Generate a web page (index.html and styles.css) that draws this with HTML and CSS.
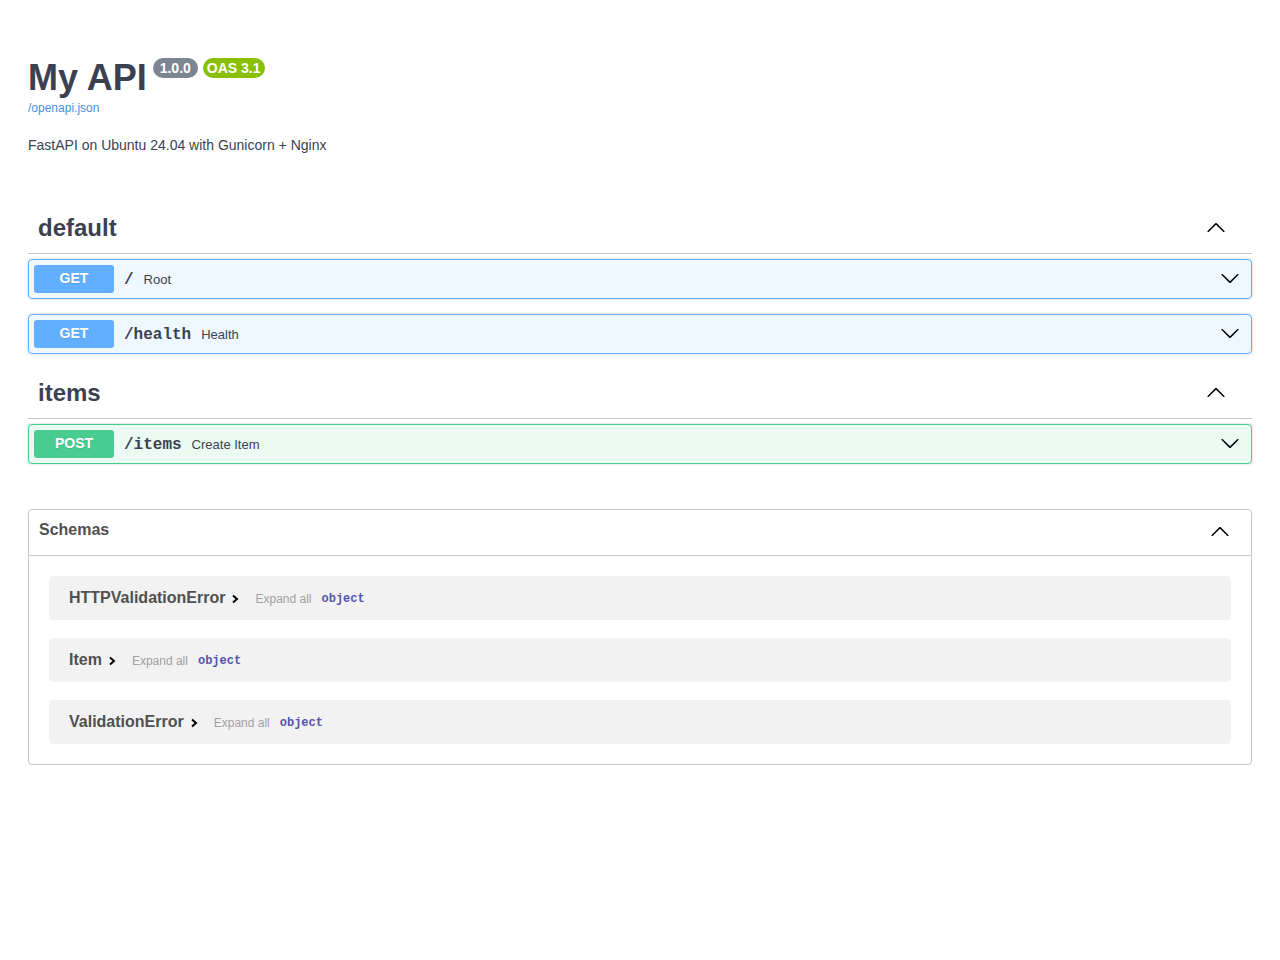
FILE: index.html
```html
<!DOCTYPE html>
<html lang="en">
<head>
    <meta charset="UTF-8">
    <meta name="viewport" content="width=device-width, initial-scale=1.0">
    <title>My API - Swagger UI</title>
    <link rel="stylesheet" href="styles.css">
</head>
<body>
    <div class="wrapper">
        <div class="info">
            <h1 class="title">
                <span>My API</span>
                <span class="badge badge-version">1.0.0</span>
                <span class="badge badge-oas">OAS 3.1</span>
            </h1>
            <a class="spec-link" href="#">/openapi.json</a>
            <p class="description">FastAPI on Ubuntu 24.04 with Gunicorn + Nginx</p>
        </div>

        <!-- tag: default -->
        <div class="tag-section">
            <div class="tag-header">
                <h3>default</h3>
                <svg class="arrow" width="20" height="20" viewBox="0 0 20 20"><path d="M17.418 14.908c.272.268.709.268.979 0s.271-.701 0-.969l-7.908-7.83c-.27-.268-.707-.268-.979 0l-7.908 7.83c-.27.268-.27.701 0 .969.271.268.709.268.979 0L10 7.767l7.418 7.141z"/></svg>
            </div>
            <div class="tag-body">
                <div class="opblock opblock-get">
                    <span class="method">GET</span>
                    <span class="route">
                        <span class="path">/</span>
                        <span class="summary">Root</span>
                    </span>
                    <svg class="arrow" width="20" height="20" viewBox="0 0 20 20"><path d="M17.418 6.109c.272-.268.709-.268.979 0s.271.701 0 .969l-7.908 7.83c-.27.268-.707.268-.979 0l-7.908-7.83c-.27-.268-.27-.701 0-.969.271-.268.709-.268.979 0L10 13.25l7.418-7.141z"/></svg>
                </div>
                <div class="opblock opblock-get">
                    <span class="method">GET</span>
                    <span class="route">
                        <span class="path">/health</span>
                        <span class="summary">Health</span>
                    </span>
                    <svg class="arrow" width="20" height="20" viewBox="0 0 20 20"><path d="M17.418 6.109c.272-.268.709-.268.979 0s.271.701 0 .969l-7.908 7.83c-.27.268-.707.268-.979 0l-7.908-7.83c-.27-.268-.27-.701 0-.969.271-.268.709-.268.979 0L10 13.25l7.418-7.141z"/></svg>
                </div>
            </div>
        </div>

        <!-- tag: items -->
        <div class="tag-section">
            <div class="tag-header">
                <h3>items</h3>
                <svg class="arrow" width="20" height="20" viewBox="0 0 20 20"><path d="M17.418 14.908c.272.268.709.268.979 0s.271-.701 0-.969l-7.908-7.83c-.27-.268-.707-.268-.979 0l-7.908 7.83c-.27.268-.27.701 0 .969.271.268.709.268.979 0L10 7.767l7.418 7.141z"/></svg>
            </div>
            <div class="tag-body">
                <div class="opblock opblock-post">
                    <span class="method">POST</span>
                    <span class="route">
                        <span class="path">/items</span>
                        <span class="summary">Create Item</span>
                    </span>
                    <svg class="arrow" width="20" height="20" viewBox="0 0 20 20"><path d="M17.418 6.109c.272-.268.709-.268.979 0s.271.701 0 .969l-7.908 7.83c-.27.268-.707.268-.979 0l-7.908-7.83c-.27-.268-.27-.701 0-.969.271-.268.709-.268.979 0L10 13.25l7.418-7.141z"/></svg>
                </div>
            </div>
        </div>

        <!-- schemas -->
        <section class="models">
            <div class="models-header">
                <h4>Schemas</h4>
                <svg class="arrow" width="20" height="20" viewBox="0 0 20 20"><path d="M17.418 14.908c.272.268.709.268.979 0s.271-.701 0-.969l-7.908-7.83c-.27-.268-.707-.268-.979 0l-7.908 7.83c-.27.268-.27.701 0 .969.271.268.709.268.979 0L10 7.767l7.418 7.141z"/></svg>
            </div>
            <div class="models-body">
                <div class="model-row">
                    <span class="model-title">HTTPValidationError</span>
                    <svg class="toggle" width="8" height="10" viewBox="0 0 8 10"><polyline points="2,1.5 6,5 2,8.5"/></svg>
                    <span class="expand">Expand all</span>
                    <span class="type">object</span>
                </div>
                <div class="model-row">
                    <span class="model-title">Item</span>
                    <svg class="toggle" width="8" height="10" viewBox="0 0 8 10"><polyline points="2,1.5 6,5 2,8.5"/></svg>
                    <span class="expand">Expand all</span>
                    <span class="type">object</span>
                </div>
                <div class="model-row">
                    <span class="model-title">ValidationError</span>
                    <svg class="toggle" width="8" height="10" viewBox="0 0 8 10"><polyline points="2,1.5 6,5 2,8.5"/></svg>
                    <span class="expand">Expand all</span>
                    <span class="type">object</span>
                </div>
            </div>
        </section>
    </div>
</body>
</html>
```

FILE: styles.css
```css
body {
    margin: 0;
    background: #fff;
    font-family: "Liberation Sans", Arial, sans-serif;
    color: #3b4151;
}
.wrapper {
    padding: 0 28px;
}

/* header */
.info {
    padding-top: 56px;
    margin-bottom: 49px;
}
.title {
    display: flex;
    align-items: flex-start;
    margin: 0;
    font-size: 36px;
    line-height: 43px;
    font-weight: bold;
    color: #3b4151;
}
.badge {
    margin-top: 2px;
    margin-left: 5px;
    height: 20px;
    line-height: 20px;
    padding: 0 6px;
    border-radius: 57px;
    font-size: 14px;
    color: #fff;
}
.badge-version {
    margin-left: 6px;
    padding: 0 7px;
    background: #7d8492;
}
.badge-oas {
    padding: 0 4px;
    background: #89bf04;
}
.spec-link {
    display: block;
    margin-top: 2px;
    font-size: 12px;
    line-height: 15px;
    color: #4990e2;
    text-decoration: none;
}
.description {
    margin: 19px 0 0;
    font-size: 14px;
    line-height: 20px;
}

/* tag groups */
.tag-section {
    margin-bottom: 15px;
}
.tag-header {
    display: flex;
    align-items: center;
    justify-content: space-between;
    padding: 9px 26px 11px 10px;
    border-bottom: 1px solid rgba(59, 65, 81, .3);
}
.tag-header h3 {
    margin: 0;
    font-size: 24px;
    line-height: 29px;
}
.tag-header .arrow {
    margin-bottom: 2px;
}
.tag-body {
    padding-top: 5px;
}
.arrow {
    flex: none;
    fill: #000;
}

/* operations */
.opblock {
    display: flex;
    align-items: center;
    padding: 5px 11px 5px 5px;
    margin-bottom: 15px;
    border: 1px solid;
    border-radius: 4px;
    box-shadow: 0 0 3px rgba(0, 0, 0, .19);
}
.opblock:last-child {
    margin-bottom: 0;
}
.opblock .arrow {
    margin-bottom: 3px;
}
.opblock-get {
    background: rgba(97, 175, 254, .1);
    border-color: #61affe;
}
.opblock-get .method {
    background: #61affe;
}
.opblock-post {
    background: rgba(73, 204, 144, .1);
    border-color: #49cc90;
}
.opblock-post .method {
    background: #49cc90;
}
.method {
    width: 80px;
    height: 28px;
    line-height: 27px;
    border-radius: 3px;
    text-align: center;
    font-size: 14px;
    font-weight: bold;
    color: #fff;
    text-shadow: 0 1px 0 rgba(0, 0, 0, .1);
}
.route {
    flex: 1;
    display: flex;
    align-items: baseline;
    padding-top: 2px;
}
.path {
    padding: 0 10px;
    font-family: "Liberation Mono", "Courier New", monospace;
    font-size: 16px;
    font-weight: bold;
}
.summary {
    font-size: 13px;
}

/* schemas */
.models {
    margin-top: 45px;
    border: 1px solid rgba(59, 65, 81, .3);
    border-radius: 4px;
}
.models-header {
    display: flex;
    align-items: center;
    justify-content: space-between;
    height: 45px;
    padding: 0 21px 0 10px;
    border-bottom: 1px solid rgba(59, 65, 81, .3);
}
.models-header h4 {
    margin: 0 0 5px;
    font-size: 16px;
    color: #505050;
}
.models-header .arrow {
    margin-bottom: 3px;
}
.models-body {
    display: flex;
    flex-direction: column;
    gap: 18px;
    padding: 20px;
}
.model-row {
    display: flex;
    align-items: center;
    height: 44px;
    padding: 0 20px;
    border-radius: 4px;
    background: rgba(0, 0, 0, .05);
}
.model-title {
    font-size: 16px;
    font-weight: bold;
    color: #505050;
}
.toggle {
    margin: 2px 0 0 6px;
    fill: none;
    stroke: #000;
    stroke-width: 2;
}
.expand {
    margin: 2px 0 0 16px;
    font-size: 12px;
    color: #a0a0a0;
}
.type {
    margin: 2px 0 0 10px;
    font-family: "Liberation Mono", "Courier New", monospace;
    font-size: 12px;
    font-weight: bold;
    color: #55a;
}
```
